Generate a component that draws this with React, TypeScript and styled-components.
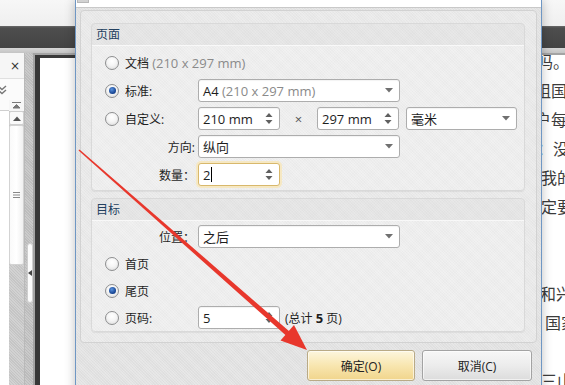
import React from "react";
import styled, { createGlobalStyle, css } from "styled-components";

const GlobalStyle = createGlobalStyle`
  *, *::before, *::after { box-sizing: border-box; }
  html, body { margin: 0; padding: 0; background: #fff; }
  body { font-family: "Open Sans", "Noto Sans CJK SC", sans-serif; }
`;

const texture = css`
  background-image:
    repeating-linear-gradient(45deg, rgba(255, 255, 255, 0.22) 0 1px, transparent 1px 2px),
    repeating-linear-gradient(-45deg, rgba(0, 0, 0, 0.012) 0 1px, transparent 1px 2px);
`;

// ---------- background application ----------

const Screen = styled.div`
  position: relative;
  width: 565px;
  height: 385px;
  overflow: hidden;
  display: flex;
  flex-direction: column;
  background: #fff;
`;

const TopStrip = styled.div`
  height: 26px;
  flex-shrink: 0;
  background: linear-gradient(#f7f7f7, #efefef);
`;

const Toolbar = styled.div`
  height: 22px;
  flex-shrink: 0;
  background: linear-gradient(#6a6a6a 0, #4e4e4e 2px, #444 100%);
`;

const ToolbarEdge = styled.div`
  height: 5px;
  flex-shrink: 0;
  background: linear-gradient(#d6d6d6, #c4c4c4);
`;

const Main = styled.div`
  flex: 1;
  display: flex;
  min-height: 0;
`;

const SidePanel = styled.div`
  width: 25px;
  flex-shrink: 0;
  display: flex;
  flex-direction: column;
  background: #f6f6f6;
  border-right: 1px solid #b9b9b9;
`;

const SideHeader = styled.div`
  height: 26px;
  display: flex;
  align-items: center;
  justify-content: flex-end;
  padding-right: 4px;
  font: 12px "DejaVu Sans", sans-serif;
  color: #333;
  border-bottom: 1px solid #e0e0e0;
`;

const SideTools = styled.div`
  height: 21px;
  display: flex;
  align-items: center;
  margin-left: -3px;
  background: #fbfbfb;
`;

const SideBody = styled.div`
  flex: 1;
  display: flex;
`;

const SideList = styled.div`
  flex: 1;
  background: #fff;
  border-top: 10px solid #fbfbfb;
  box-shadow: inset 0 1px 0 #cfcfcf;
`;

const Scrollbar = styled.div`
  width: 15px;
  display: flex;
  flex-direction: column;
  background: #c6c6c6;
  ${texture};
`;

const ScrollTop = styled.div`
  height: 11px;
  display: flex;
  align-items: center;
  justify-content: center;
  background: #f6f6f6;
`;

const ScrollButton = styled.div`
  height: 14px;
  display: flex;
  align-items: center;
  justify-content: center;
  background: #fafafa;
  border: 1px solid #cfcfcf;
  border-radius: 2px;
`;

const ScrollThumb = styled.div`
  height: 140px;
  display: flex;
  align-items: center;
  justify-content: center;
  background: linear-gradient(90deg, #fafafa, #fff, #f0f0f0);
  border: 1px solid #d3d3d3;
  border-radius: 2px;
`;

const Splitter = styled.div`
  width: 8px;
  flex-shrink: 0;
  padding: 190px 0 0 2px;
  background: #bdbdbd;
  ${texture};
`;

const SplitterHandle = styled.div`
  width: 6px;
  height: 60px;
  display: flex;
  align-items: center;
  justify-content: center;
  border-radius: 3px;
  background: #fbfbfb;
  border: 1px solid #cfcfcf;
`;

const Viewer = styled.div`
  flex: 1;
  padding: 2px 0 0 2px;
  background: #a4a4a4;
  display: flex;
`;

const Page = styled.div`
  flex: 1;
  overflow: hidden;
  border-left: 5px solid #383838;
  background: linear-gradient(#3a3a3a, #3a3a3a) top left / 60px 3px no-repeat, #fff;
`;

const DocText = styled.div`
  margin-top: -8px;
  font: 16px/29px "Noto Sans CJK SC", sans-serif;
  color: #3c3c3c;
`;

const DocLine = styled.div<{ $shift: number }>`
  height: 29px;
  white-space: pre;
  text-align: right;
  margin-right: ${(p) => p.$shift}px;
`;

// ---------- dialog ----------

const Dialog = styled.div`
  position: absolute;
  left: 75px;
  top: 0;
  bottom: -30px;
  width: 467px;
  display: flex;
  flex-direction: column;
  border-left: 1px solid #6f97c4;
  border-right: 1px solid #6f97c4;
  background-color: #e1e1e1;
  ${texture};
  box-shadow: 0 0 10px rgba(0, 0, 0, 0.25);
  font-size: 12px;
  color: #1e1e1e;
`;

const TitleEdge = styled.div`
  height: 8px;
  flex-shrink: 0;
  padding-left: 1px;
  background: #fff;
  border-bottom: 1px solid #c9c9c9;
`;

const TitleIcon = styled.div`
  width: 12px;
  height: 3px;
  background: #d2d2d2;
  border: 1px solid #b8b8b8;
  border-top: none;
`;

const DialogBody = styled.div`
  flex: 1;
  padding: 2px 4px 0;
  display: flex;
  flex-direction: column;
`;

const ContentPanel = styled.div`
  display: flex;
  flex-direction: column;
  gap: 7px;
  padding: 12px 11px 10px 10px;
  border: 1px solid #d2d2d2;
  border-radius: 4px;
  background-color: #e8e8e8;
  ${texture};
`;

const Group = styled.section`
  border: 1px solid #d9d9d9;
  border-radius: 4px;
  background: rgba(255, 255, 255, 0.22);
  box-shadow: 0 1px 1px rgba(0, 0, 0, 0.06);
`;

const GroupHeader = styled.div`
  height: 22px;
  line-height: 22px;
  padding-left: 4px;
  font-size: 12px;
  color: #23405f;
  background: rgba(0, 0, 0, 0.035);
  border-bottom: 1px solid rgba(255, 255, 255, 0.7);
  border-radius: 3px 3px 0 0;
`;

const GroupRows = styled.div<{ $gap: number; $top: number; $bottom: number }>`
  display: flex;
  flex-direction: column;
  gap: ${(p) => p.$gap}px;
  padding: ${(p) => p.$top}px 0 ${(p) => p.$bottom}px 13px;
`;

const Row = styled.div`
  height: 23px;
  display: flex;
  align-items: center;
`;

const Lead = styled.label<{ $right?: boolean }>`
  width: 93px;
  flex-shrink: 0;
  display: flex;
  align-items: center;
  gap: 6px;
  justify-content: ${(p) => (p.$right ? "flex-end" : "flex-start")};
  padding-right: ${(p) => (p.$right ? "3px" : "0")};
  white-space: nowrap;
`;

const Radio = styled.span<{ $checked?: boolean }>`
  width: 14px;
  height: 14px;
  flex-shrink: 0;
  border-radius: 50%;
  border: 1px solid #8d8e8f;
  background: radial-gradient(circle at 50% 35%, #fff 0%, #f5f5f5 45%, #d9d9d9 100%);
  display: flex;
  align-items: center;
  justify-content: center;
  &::after {
    content: "";
    display: ${(p) => (p.$checked ? "block" : "none")};
    width: 7px;
    height: 7px;
    border-radius: 50%;
    background: radial-gradient(circle at 40% 35%, #5a93e0, #123f8c 70%);
  }
`;

const Muted = styled.span`
  color: #8a8a8a;
  font-size: 13px;
`;

const Field = styled.div<{ $width: number; $focused?: boolean }>`
  width: ${(p) => p.$width}px;
  height: 23px;
  flex-shrink: 0;
  display: flex;
  align-items: center;
  justify-content: space-between;
  padding: 0 6px 0 4px;
  background: #fff;
  border: 1px solid ${(p) => (p.$focused ? "#d8b86c" : "#adadad")};
  border-radius: 3px;
  box-shadow: ${(p) => (p.$focused ? "0 0 0 2px #f6e8c3" : "inset 0 1px 1px rgba(0,0,0,0.05)")};
  font-size: 13px;
  color: #1e1e1e;
  white-space: nowrap;
`;

const Caret = styled.span`
  width: 1px;
  height: 15px;
  background: #000;
  margin-left: 1px;
`;

const FieldText = styled.span`
  display: flex;
  align-items: center;
`;

const Times = styled.span`
  width: 37px;
  text-align: center;
  color: #555;
  font-size: 13px;
`;

const Gap = styled.span<{ $w: number }>`
  width: ${(p) => p.$w}px;
  flex-shrink: 0;
`;

const Total = styled.span`
  margin-left: 5px;
  font-size: 12px;
  white-space: nowrap;
  b {
    font-size: 13px;
    font-weight: 700;
  }
`;

const ButtonRow = styled.div`
  display: flex;
  justify-content: flex-end;
  gap: 7px;
  padding: 7px 5px 0 0;
`;

const Button = styled.button<{ $primary?: boolean; $width: number }>`
  width: ${(p) => p.$width}px;
  height: 31px;
  border-radius: 3px;
  font: 12px "Open Sans", "Noto Sans CJK SC", sans-serif;
  color: #222;
  border: 1px solid ${(p) => (p.$primary ? "#b9aa86" : "#a3a3a3")};
  background: ${(p) =>
    p.$primary
      ? "linear-gradient(#fdf6de, #f8e6b0 50%, #f1d58c)"
      : "linear-gradient(#f7f7f7, #ececec 50%, #dcdcdc)"};
  box-shadow: inset 0 0 0 1px rgba(255, 255, 255, 0.6);
`;

const ArrowLayer = styled.svg`
  position: absolute;
  inset: 0;
  pointer-events: none;
`;

// ---------- small drawings ----------

const DropCaret = () => (
  <svg width="8" height="5" viewBox="0 0 8 5">
    <path d="M0 0 L8 0 L4 4.5 Z" fill="#707070" />
  </svg>
);

const SpinArrows = () => (
  <svg width="8" height="13" viewBox="0 0 8 13">
    <path d="M0.5 5 L4 1 L7.5 5 Z M0.5 8 L4 12 L7.5 8 Z" fill="#606060" />
  </svg>
);

function Select({ width, children }: { width: number; children: React.ReactNode }) {
  return (
    <Field $width={width}>
      <FieldText>{children}</FieldText>
      <DropCaret />
    </Field>
  );
}

function Spin({ width, focused, children }: { width: number; focused?: boolean; children: React.ReactNode }) {
  return (
    <Field $width={width} $focused={focused}>
      <FieldText>{children}</FieldText>
      <SpinArrows />
    </Field>
  );
}

const docLines = [
  { text: "吗。", shift: -4 },
  { text: "祖国", shift: -2 },
  { text: "户每", shift: -2 },
  { text: "：没", shift: -4 },
  { text: "我的", shift: -8 },
  { text: "定要", shift: -8 },
  { text: "", shift: 0 },
  { text: "", shift: 0 },
  { text: "和兴", shift: -7 },
  { text: "国家", shift: -12 },
  { text: "", shift: 0 },
  { text: "三山", shift: -8 },
];

export default function App() {
  return (
    <Screen>
      <GlobalStyle />
      <TopStrip />
      <Toolbar />
      <ToolbarEdge />
      <Main>
        <SidePanel>
          <SideHeader>×</SideHeader>
          <SideTools>
            <svg width="10" height="10" viewBox="0 0 10 10">
              <path d="M1 1 L5 4.5 L9 1 M1 5 L5 8.5 L9 5" stroke="#777" strokeWidth="1.4" fill="none" />
            </svg>
          </SideTools>
          <SideBody>
            <SideList />
            <Scrollbar>
              <ScrollTop>
                <svg width="9" height="7" viewBox="0 0 9 7">
                  <path d="M0 0.5 H9 M1 6 L4.5 2.5 L8 6 Z" stroke="#777" fill="#777" strokeWidth="1" />
                </svg>
              </ScrollTop>
              <ScrollButton>
                <svg width="8" height="5" viewBox="0 0 8 5">
                  <path d="M0 5 L4 0.5 L8 5 Z" fill="#555" />
                </svg>
              </ScrollButton>
              <ScrollThumb>
                <svg width="7" height="6" viewBox="0 0 7 6">
                  <path d="M0 0.5 H7 M0 3 H7 M0 5.5 H7" stroke="#888" strokeWidth="1" />
                </svg>
              </ScrollThumb>
            </Scrollbar>
          </SideBody>
        </SidePanel>
        <Splitter>
          <SplitterHandle>
            <svg width="4" height="6" viewBox="0 0 4 6">
              <path d="M4 0 L0 3 L4 6 Z" fill="#444" />
            </svg>
          </SplitterHandle>
        </Splitter>
        <Viewer>
          <Page>
            <DocText>
              {docLines.map((line, i) => (
                <DocLine key={i} $shift={line.shift}>
                  {line.text}
                </DocLine>
              ))}
            </DocText>
          </Page>
        </Viewer>
      </Main>

      <Dialog>
        <TitleEdge>
          <TitleIcon />
        </TitleEdge>
        <DialogBody>
          <ContentPanel>
            <Group>
              <GroupHeader>页面</GroupHeader>
              <GroupRows $gap={5} $top={5} $bottom={4}>
                <Row>
                  <Lead>
                    <Radio />
                    <span>
                      文档 <Muted>(210 x 297 mm)</Muted>
                    </span>
                  </Lead>
                </Row>
                <Row>
                  <Lead>
                    <Radio $checked />
                    标准:
                  </Lead>
                  <Select width={202}>
                    A4&nbsp;<Muted>(210 x 297 mm)</Muted>
                  </Select>
                </Row>
                <Row>
                  <Lead>
                    <Radio />
                    自定义:
                  </Lead>
                  <Spin width={82}>210 mm</Spin>
                  <Times>×</Times>
                  <Spin width={82}>297 mm</Spin>
                  <Gap $w={7} />
                  <Select width={111}>毫米</Select>
                </Row>
                <Row>
                  <Lead $right>方向:</Lead>
                  <Select width={202}>纵向</Select>
                </Row>
                <Row>
                  <Lead $right>数量：</Lead>
                  <Spin width={82} focused>
                    2<Caret />
                  </Spin>
                </Row>
              </GroupRows>
            </Group>

            <Group>
              <GroupHeader>目标</GroupHeader>
              <GroupRows $gap={4} $top={4} $bottom={2}>
                <Row>
                  <Lead $right>位置：</Lead>
                  <Select width={202}>之后</Select>
                </Row>
                <Row>
                  <Lead>
                    <Radio />
                    首页
                  </Lead>
                </Row>
                <Row>
                  <Lead>
                    <Radio $checked />
                    尾页
                  </Lead>
                </Row>
                <Row>
                  <Lead>
                    <Radio />
                    页码:
                  </Lead>
                  <Spin width={82}>5</Spin>
                  <Total>
                    (总计 <b>5</b> 页)
                  </Total>
                </Row>
              </GroupRows>
            </Group>
          </ContentPanel>

          <ButtonRow>
            <Button $primary $width={108}>确定(O)</Button>
            <Button $width={110}>取消(C)</Button>
          </ButtonRow>
        </DialogBody>
      </Dialog>

      <ArrowLayer width="565" height="385" viewBox="0 0 565 385">
        <polygon points="78.5,150.6 79.5,149.4 289.5,331.5 286,335.5" fill="#e8372c" />
        <polygon points="307,350 280.5,340.5 294,325" fill="#e8372c" />
      </ArrowLayer>
    </Screen>
  );
}
